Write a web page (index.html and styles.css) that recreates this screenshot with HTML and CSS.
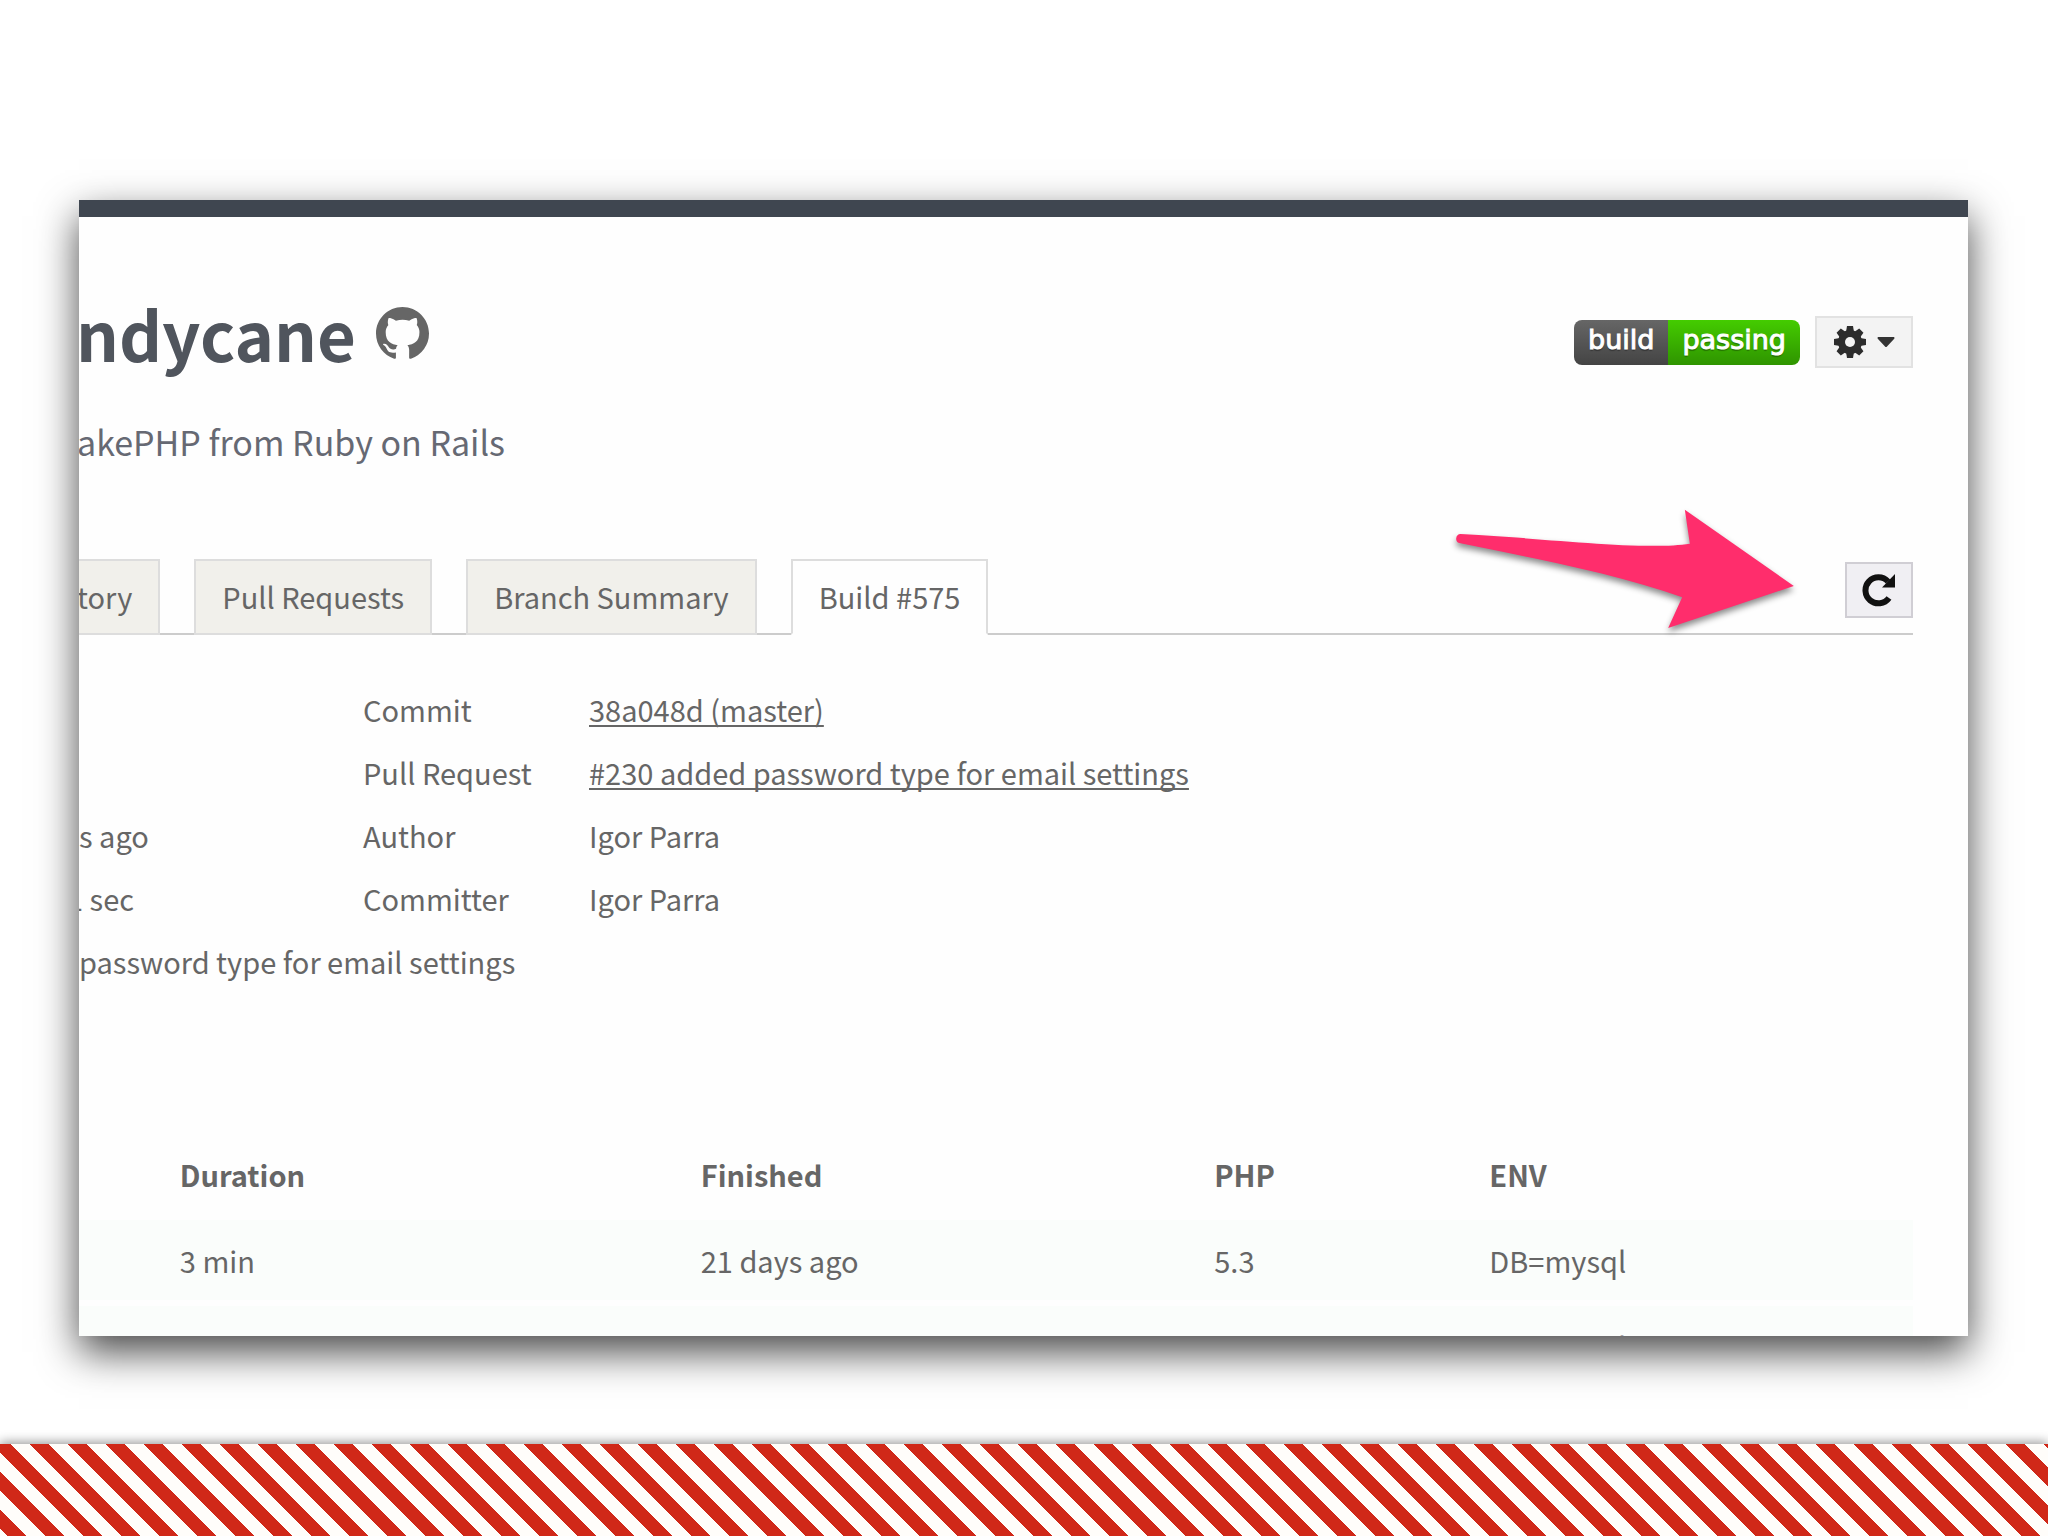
FILE: index.html
```
<!DOCTYPE html>
<html lang="en">
<head>
    <meta charset="UTF-8">
    <meta name="viewport" content="width=device-width, initial-scale=1.0">
    <title>Build #575</title>
    <link rel="stylesheet" href="styles.css">
</head>

<body>
    <main class="panel">
        <div class="content">
            <!-- repository name and status -->
            <header class="header">
                <h1 class="title">ndycane
                    <a href="#" class="github" aria-label="GitHub">
                        <svg viewBox="0 0 16 16"><path d="M8 0C3.58 0 0 3.58 0 8c0 3.54 2.29 6.53 5.47 7.59.4.07.55-.17.55-.38 0-.19-.01-.82-.01-1.49-2.01.37-2.53-.49-2.69-.94-.09-.23-.48-.94-.82-1.13-.28-.15-.68-.52-.01-.53.63-.01 1.08.58 1.23.82.72 1.21 1.87.87 2.33.66.07-.52.28-.87.51-1.07-1.78-.2-3.64-.89-3.64-3.95 0-.87.31-1.59.82-2.15-.08-.2-.36-1.02.08-2.12 0 0 .67-.21 2.2.82.64-.18 1.32-.27 2-.27s1.36.09 2 .27c1.53-1.04 2.2-.82 2.2-.82.44 1.1.16 1.92.08 2.12.51.56.82 1.27.82 2.15 0 3.07-1.87 3.75-3.65 3.95.29.25.54.73.54 1.48 0 1.07-.01 1.93-.01 2.2 0 .21.15.46.55.38A8.01 8.01 0 0 0 16 8c0-4.42-3.58-8-8-8z"/></svg>
                    </a>
                </h1>
                <div class="tools">
                    <a href="#" class="badge"><span class="badge-name">build</span><span class="badge-status">passing</span></a>
                    <button class="btn settings" aria-label="Settings">
                        <svg class="gear" viewBox="-16 -16 32 32">
                            <path d="M-4-10L-3-16H3L4-10V10L3 16H-3L-4 10Z"/>
                            <path d="M-4-10L-3-16H3L4-10V10L3 16H-3L-4 10Z" transform="rotate(45)"/>
                            <path d="M-4-10L-3-16H3L4-10V10L3 16H-3L-4 10Z" transform="rotate(90)"/>
                            <path d="M-4-10L-3-16H3L4-10V10L3 16H-3L-4 10Z" transform="rotate(135)"/>
                            <circle r="12"/>
                            <circle class="hole" r="5"/>
                        </svg>
                        <svg class="caret" viewBox="0 0 18 10"><path d="M1 0H17Q18 1 17 2L10 9.500Q9 10.500 8 9.500L1 2Q0 1 1 0Z"/></svg>
                    </button>
                </div>
            </header>
            <p class="description">akePHP from Ruby on Rails</p>

            <!-- tabs -->
            <nav class="tabs">
                <a href="#" class="tab tab-first">tory</a>
                <a href="#" class="tab">Pull Requests</a>
                <a href="#" class="tab">Branch Summary</a>
                <a href="#" class="tab active">Build #575</a>
                <button class="btn restart" aria-label="Restart build">
                    <svg viewBox="0 0 34 34">
                        <path d="M26 8.500A13 13 0 1 0 27 25" fill="none" stroke="#111" stroke-width="6"/>
                        <path d="M33 1V14.500H20Z"/>
                    </svg>
                </button>
                <svg class="arrow" viewBox="70 50 1040 390">
                    <path d="M92 131C330 142 640 182 780 160L765 58L1092 287L715 413L757 321C560 250 320 206 88 158A14 14 0 0 1 92 131Z"/>
                </svg>
            </nav>

            <!-- build details -->
            <div class="details">
                <span></span><span>Commit</span><a href="#">38a048d (master)</a>
                <span></span><span>Pull Request</span><a href="#">#230 added password type for email settings</a>
                <span>s ago</span><span>Author</span><span>Igor Parra</span>
                <span class="cut">1 sec</span><span>Committer</span><span>Igor Parra</span>
                <p class="message">password type for email settings</p>
            </div>

            <!-- jobs -->
            <table class="jobs">
                <thead>
                    <tr><th class="c1"></th><th class="c2">Duration</th><th class="c3">Finished</th><th class="c4">PHP</th><th>ENV</th></tr>
                </thead>
                <tbody>
                    <tr><td></td><td>3 min</td><td>21 days ago</td><td>5.3</td><td>DB=mysql</td></tr>
                    <tr><td></td><td>3 min</td><td>21 days ago</td><td>5.4</td><td>DB=mysql</td></tr>
                </tbody>
            </table>
        </div>
    </main>
    <footer class="stripes"></footer>
</body>

</html>
```
FILE: styles.css
```
* {
    box-sizing: border-box;
}
body {
    margin: 0;
    height: 100vh;
    display: flex;
    flex-direction: column;
    background-color: #fff;
    font-family: "Noto Sans CJK SC", sans-serif;
    font-size: 29px;
    color: #666;
}
a {
    color: inherit;
}

/* cropped window with its shadow */
.panel {
    flex: 1;
    min-height: 0;
    margin: 200px 80px 108px 79px;
    border-top: 17px solid #3f4650;
    background-color: #fefefe;
    box-shadow: 0 16px 38px rgba(0, 0, 0, 0.72);
}
.content {
    height: 100%;
    overflow: hidden;
    padding: 81px 55px 0 0;
}

/* header */
.header {
    display: flex;
    justify-content: space-between;
    align-items: flex-end;
}
.title {
    display: flex;
    align-items: center;
    gap: 20px;
    margin: 0 0 0 -3px;
    font-size: 67px;
    line-height: 70px;
    font-weight: 700;
    color: #50555d;
}
.github {
    display: flex;
    color: #666;
}
.github svg {
    width: 53px;
    height: 53px;
    fill: currentColor;
}
.tools {
    display: flex;
    align-items: center;
    gap: 15px;
}
.badge {
    display: flex;
    border-radius: 8px;
    overflow: hidden;
    font-family: "DejaVu Sans", sans-serif;
    font-size: 27px;
    line-height: 40px;
    color: #fff;
    text-decoration: none;
    text-shadow: 0 2px 1px rgba(0, 0, 0, 0.3);
    -webkit-text-stroke: 1px #fff;
}
.badge span {
    padding: 0 14px 5px;
}
.badge-name {
    background: linear-gradient(#666, #444);
}
.badge-status {
    background: linear-gradient(#4c0, #2f9400);
}
.btn {
    display: flex;
    align-items: center;
    justify-content: center;
    padding: 0;
    border: 2px solid #e2e2e2;
    background-color: #f3f3f3;
    cursor: pointer;
}
.settings {
    width: 98px;
    height: 52px;
    gap: 11px;
}
.gear {
    width: 32px;
    height: 32px;
    fill: #2c2c2c;
}
.gear .hole {
    fill: #f3f3f3;
}
.caret {
    width: 18px;
    height: 10px;
    fill: #333;
}
.description {
    margin: 50px 0 93px -2px;
    font-size: 34px;
    line-height: 48px;
    color: #666973;
}

/* tabs */
.tabs {
    position: relative;
    display: flex;
    gap: 34px;
    height: 76px;
    border-bottom: 2px solid #ccc;
}
.tab {
    height: 76px;
    padding: 0 26px;
    border: 2px solid #ddd;
    background-color: #f1f0eb;
    line-height: 71px;
    text-decoration: none;
}
.tab-first {
    margin-left: -2px;
    padding-left: 0;
    border-left: 0;
}
.tab.active {
    border-bottom-color: #fefefe;
    background-color: #fefefe;
}
.restart {
    width: 68px;
    height: 56px;
    margin: 3px 0 0 auto;
    border-color: #d0ced4;
    background-color: #f0eff3;
}
.restart svg {
    width: 34px;
    height: 34px;
    fill: #111;
}
/* arrow pointing to the restart button */
.arrow {
    position: absolute;
    top: -52px;
    right: 113px;
    width: 347px;
    height: 130px;
    overflow: visible;
    fill: #ff2d6c;
    filter: drop-shadow(0 4px 3px rgba(0, 0, 0, 0.45));
}

/* build details */
.details {
    display: grid;
    grid-template-columns: 284px 226px 1fr;
    justify-items: start;
    margin: 43px 0 135px;
    line-height: 63px;
}
.details a {
    text-underline-offset: 3px;
    text-decoration-skip-ink: none;
    text-decoration-thickness: 2px;
}
.cut {
    margin-left: -12px;
}
.message {
    grid-column: 1 / -1;
    margin: 0;
}

/* jobs */
.jobs {
    width: 100%;
    table-layout: fixed;
    border-spacing: 0 6px;
}
.jobs th,
.jobs td {
    height: 80px;
    padding: 0;
    text-align: left;
}
.jobs td {
    background-color: #fafdfb;
}
.c1 {
    width: 5.5%;
}
.c2 {
    width: 28.4%;
}
.c3 {
    width: 28%;
}
.c4 {
    width: 15%;
}

/* candy stripes */
.stripes {
    height: 92px;
    background: linear-gradient(45deg, #d02818 0 25%, #fffdfa 25% 50%, #d02818 50% 75%, #fffdfa 75%) 30px 0 / 38px 38px;
    box-shadow: 0 -2px 10px rgba(0, 0, 0, 0.4);
}
```
